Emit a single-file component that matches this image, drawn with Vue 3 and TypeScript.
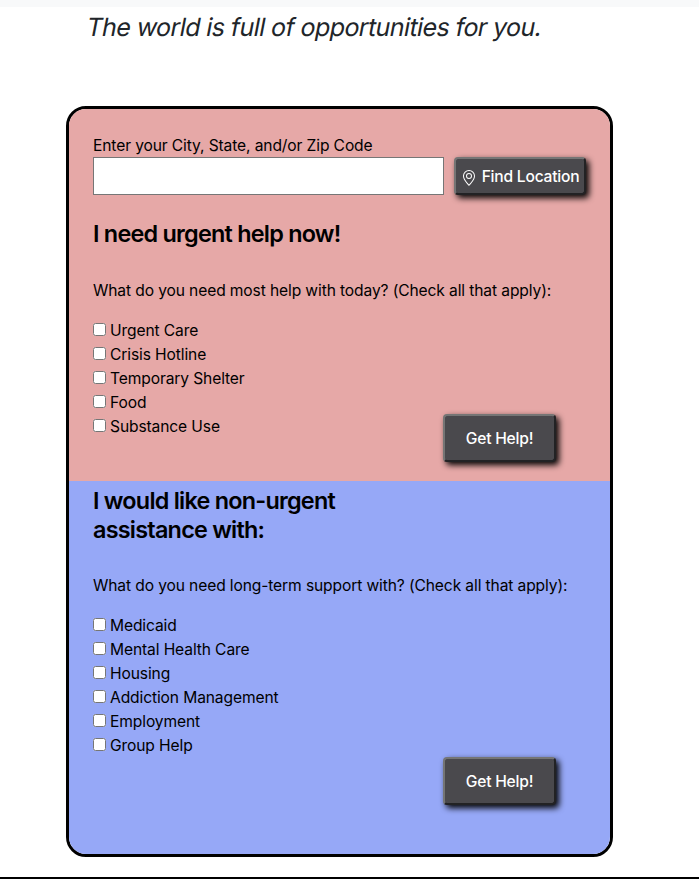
<script setup lang="ts">
interface HelpOption {
  id: string
  label: string
}

const urgentOptions: HelpOption[] = [
  { id: 'urgent-care', label: 'Urgent Care' },
  { id: 'crisis', label: 'Crisis Hotline' },
  { id: 'shelter', label: 'Temporary Shelter' },
  { id: 'food', label: 'Food' },
  { id: 'substance', label: 'Substance Use' },
]

const supportOptions: HelpOption[] = [
  { id: 'medicaid', label: 'Medicaid' },
  { id: 'mental', label: 'Mental Health Care' },
  { id: 'housing', label: 'Housing' },
  { id: 'addiction', label: 'Addiction Management' },
  { id: 'employment', label: 'Employment' },
  { id: 'group', label: 'Group Help' },
]
</script>

<template>
  <div class="page">
    <header class="banner"></header>
    <p class="tagline"><em>The world is full of opportunities for you.</em></p>

    <main class="card">
      <section class="panel urgent">
        <label class="location-label" for="location">Enter your City, State, and/or Zip Code</label>
        <div class="location-row">
          <input id="location" class="location-input" type="text" />
          <button class="btn find" type="button">
            <svg class="pin" viewBox="0 0 16 16" fill="currentColor" aria-hidden="true">
              <path d="M12.166 8.94c-.524 1.062-1.234 2.12-1.96 3.07A31.493 31.493 0 0 1 8 14.58a31.481 31.481 0 0 1-2.206-2.57c-.726-.95-1.436-2.008-1.96-3.07C3.304 7.867 3 6.862 3 6a5 5 0 0 1 10 0c0 .862-.305 1.867-.834 2.94zM8 16s6-5.686 6-10A6 6 0 0 0 2 6c0 4.314 6 10 6 10z" />
              <path d="M8 8a2 2 0 1 1 0-4 2 2 0 0 1 0 4zm0 1a3 3 0 1 0 0-6 3 3 0 0 0 0 6z" />
            </svg>
            <span>Find Location</span>
          </button>
        </div>
        <h2 class="heading">I need urgent help now!</h2>
        <p class="question q-urgent">What do you need most help with today? (Check all that apply):</p>
        <div class="choices">
          <ul class="options">
            <li v-for="option in urgentOptions" :key="option.id">
              <input :id="option.id" class="box" type="checkbox" />
              <label :for="option.id">{{ option.label }}</label>
            </li>
          </ul>
          <button class="btn help" type="button">Get Help!</button>
        </div>
      </section>

      <section class="panel support">
        <h2 class="heading">I would like non-urgent assistance with:</h2>
        <p class="question q-support">What do you need long-term support with? (Check all that apply):</p>
        <div class="choices">
          <ul class="options">
            <li v-for="option in supportOptions" :key="option.id">
              <input :id="option.id" class="box" type="checkbox" />
              <label :for="option.id">{{ option.label }}</label>
            </li>
          </ul>
          <button class="btn help" type="button">Get Help!</button>
        </div>
      </section>
    </main>

    <div class="rule"></div>
  </div>
</template>

<style>
body {
  background: #fff;
}
</style>

<style scoped>
.page {
  box-sizing: border-box;
  height: 879px;
  overflow: hidden;
  display: flex;
  flex-direction: column;
  font-family: Inter, 'Liberation Sans', sans-serif;
  font-size: 15.6px;
  line-height: 26px;
  letter-spacing: -0.12px;
  color: #000;
}

.banner {
  height: 7px;
  background: #f8f9fa;
}

.tagline {
  margin: 0 0 0 87px;
  padding-top: 4px;
  height: 95px;
  font-size: 25px;
  line-height: 32px;
  font-weight: 430;
  letter-spacing: -0.59px;
  color: #212529;
  white-space: nowrap;
}

.tagline em {
  display: inline-block;
  font-style: normal;
  transform: skewX(-11deg);
}

.card {
  box-sizing: border-box;
  width: 547px;
  height: 751px;
  margin-left: 66px;
  border: 3px solid #000;
  border-radius: 20px;
  overflow: hidden;
}

.panel {
  box-sizing: border-box;
  padding-left: 24px;
}

.urgent {
  height: 372px;
  padding-top: 24px;
  background: #e6a8a7;
}

.support {
  height: 373px;
  padding-top: 5px;
  background: #96a8f7;
}

.location-label {
  display: block;
  height: 24px;
}

.location-row {
  display: flex;
  gap: 10px;
}

.location-input {
  box-sizing: border-box;
  width: 351px;
  height: 38px;
  padding: 0 8px;
  border: 1px solid #767676;
  border-radius: 0;
  background: #fff;
}

.btn {
  box-sizing: border-box;
  display: flex;
  align-items: center;
  justify-content: center;
  padding: 2px 0 0;
  border: 2px solid;
  border-color: #757575 #222224 #222224 #757575;
  border-radius: 4px;
  background: #4a494d;
  box-shadow: 3px 3px 6px #000;
  color: #fff;
  font: inherit;
  font-weight: 450;
  letter-spacing: -0.22px;
  white-space: nowrap;
}

.find {
  width: 132px;
  height: 38px;
  gap: 5px;
}

.pin {
  width: 16px;
  height: 16px;
  margin-top: 1px;
}

.heading {
  width: 270px;
  margin: 0;
  font-size: 23.4px;
  line-height: 29px;
  font-weight: 570;
  letter-spacing: -0.76px;
}

.urgent .heading {
  margin-top: 24px;
}

.question {
  height: 24px;
  margin: 0;
  white-space: nowrap;
}

.q-urgent {
  margin-top: 30px;
}

.q-support {
  margin-top: 29px;
}

.choices {
  display: flex;
  align-items: flex-start;
  margin-top: 16px;
}

.options {
  width: 350px;
  margin: 0;
  padding: 0;
  list-style: none;
}

.options li {
  display: flex;
  gap: 4px;
  height: 24px;
}

.box {
  flex: none;
  width: 13px;
  height: 13px;
  margin: 5px 0 0;
}

.help {
  width: 113px;
  height: 48px;
  margin-top: 96px;
}

.support .help {
  margin-top: 144px;
}

.rule {
  height: 2px;
  margin-top: 20px;
  background: #000;
}
</style>
